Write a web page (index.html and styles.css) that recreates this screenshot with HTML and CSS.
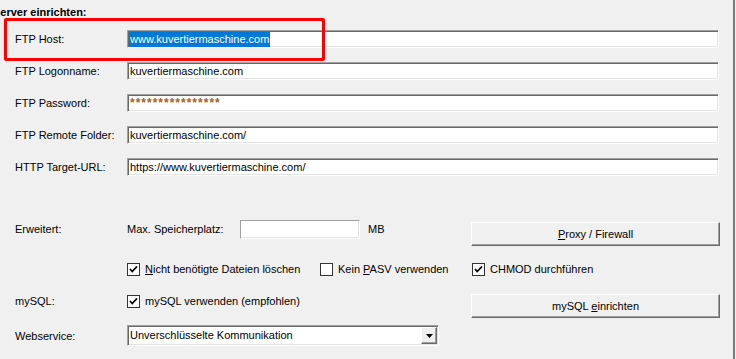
FILE: index.html
```html
<!DOCTYPE html>
<html lang="de">
<head>
    <meta charset="UTF-8">
    <meta name="viewport" content="width=device-width, initial-scale=1.0">
    <title>Server einrichten</title>
    <link rel="stylesheet" href="styles.css">
</head>
<body>
    <div class="panel">
        <div class="title">Server einrichten:</div>

        <div class="fields">
            <div class="row">
                <span class="lbl">FTP Host:</span>
                <div class="field"><span class="sel">www.kuvertiermaschine.com</span></div>
            </div>
            <div class="row">
                <span class="lbl">FTP Logonname:</span>
                <div class="field">kuvertiermaschine.com</div>
            </div>
            <div class="row">
                <span class="lbl">FTP Password:</span>
                <div class="field"><span class="pw">****************</span></div>
            </div>
            <div class="row">
                <span class="lbl">FTP Remote Folder:</span>
                <div class="field">kuvertiermaschine.com/</div>
            </div>
            <div class="row">
                <span class="lbl">HTTP Target-URL:</span>
                <div class="field">https://www.kuvertiermaschine.com/</div>
            </div>
        </div>

        <div class="opts">
            <div class="opt opt-a">
                <span class="lbl">Erweitert:</span>
                <div class="mid">
                    <span class="cap">Max. Speicherplatz:</span>
                    <div class="box"></div>
                    <span class="unit">MB</span>
                </div>
                <div class="side">
                    <button class="btn btn-a" type="button"><span><u>P</u>roxy / Firewall</span></button>
                </div>
            </div>

            <div class="opt opt-b">
                <span class="lbl"></span>
                <div class="mid">
                    <label class="check wide">
                        <span class="cb"><svg viewBox="0 0 11 11" width="11" height="11"><path d="M2 5 L4.2 7.5 L9 2.5" fill="none" stroke="#000" stroke-width="1.8"/></svg></span>
                        <span><u>N</u>icht benötigte Dateien löschen</span>
                    </label>
                    <label class="check">
                        <span class="cb"></span>
                        <span>Kein <u>P</u>ASV verwenden</span>
                    </label>
                </div>
                <div class="side">
                    <label class="check shift">
                        <span class="cb"><svg viewBox="0 0 11 11" width="11" height="11"><path d="M2 5 L4.2 7.5 L9 2.5" fill="none" stroke="#000" stroke-width="1.8"/></svg></span>
                        <span>CHMOD durchführen</span>
                    </label>
                </div>
            </div>

            <div class="opt opt-c">
                <span class="lbl">mySQL:</span>
                <div class="mid">
                    <label class="check">
                        <span class="cb"><svg viewBox="0 0 11 11" width="11" height="11"><path d="M2 5 L4.2 7.5 L9 2.5" fill="none" stroke="#000" stroke-width="1.8"/></svg></span>
                        <span>mySQL verwenden (empfohlen)</span>
                    </label>
                </div>
                <div class="side">
                    <button class="btn" type="button"><span>mySQL <u>e</u>inrichten</span></button>
                </div>
            </div>

            <div class="opt opt-d">
                <span class="lbl">Webservice:</span>
                <div class="drop">
                    <span class="drop-text">Unverschlüsselte Kommunikation</span>
                    <span class="drop-btn"><svg viewBox="0 0 7 4" width="7" height="4"><polygon points="0,0 7,0 3.5,4" fill="#000"/></svg></span>
                </div>
            </div>
        </div>

        <div class="mark"></div>
    </div>
</body>
</html>
```

FILE: styles.css
```css
body {
    margin: 0;
    background: #f0f0f0;
    font-family: "Liberation Sans", Arial, sans-serif;
    font-size: 11px;
    color: #000;
}

.panel {
    position: relative;
    width: 733px;
    height: 359px;
    border-right: 2px solid #7a7a7a;
    overflow: hidden;
}

.title {
    font-weight: bold;
    padding-top: 5px;
    height: 18px;
    line-height: 15px;
    margin-left: -7px;
    white-space: nowrap;
}

.fields {
    padding-left: 15px;
}

.row {
    display: flex;
    align-items: center;
    height: 32px;
}

.lbl {
    width: 112px;
    flex: none;
}

.field {
    width: 592px;
    height: 18px;
    box-sizing: border-box;
    background: #fff;
    border: 1px solid;
    border-color: #a0a0a0 #fff #fff #a0a0a0;
    box-shadow: inset 1px 1px #696969, inset -1px -1px #e3e3e3;
    padding: 0 2px;
    line-height: 16px;
    white-space: nowrap;
    overflow: hidden;
}

.sel {
    display: inline-block;
    margin-left: -1px;
    padding: 0 1px;
    line-height: 15px;
    background: #0078d7;
    color: #fff;
    vertical-align: top;
    margin-top: 1px;
}

.pw {
    color: #a4621e;
    font-size: 12px;
    font-weight: bold;
    letter-spacing: 1px;
}

.opts {
    padding-left: 15px;
}

.opt {
    display: flex;
    align-items: center;
}

.mid {
    width: 344px;
    flex: none;
    display: flex;
    align-items: center;
}

.side {
    width: 249px;
    flex: none;
}

.opt-a {
    margin-top: 37px;
    height: 26px;
    align-items: flex-start;
}

.opt-a .lbl,
.cap,
.unit {
    line-height: 19px;
}

.opt-a .mid {
    align-items: flex-start;
}

.cap {
    width: 113px;
    flex: none;
}

.box {
    width: 120px;
    height: 19px;
    box-sizing: border-box;
    background: #fff;
    border: 1px solid;
    border-color: #a0a0a0 #fff #fff #a0a0a0;
    box-shadow: inset -1px -1px #e3e3e3;
}

.unit {
    margin-left: 8px;
}

.btn {
    width: 249px;
    height: 24px;
    box-sizing: border-box;
    padding: 0;
    background: #f0f0f0;
    border: 1px solid;
    border-color: #fff #696969 #696969 #fff;
    box-shadow: inset -1px -1px #a0a0a0;
    font: inherit;
    color: #000;
    display: flex;
    align-items: center;
    justify-content: center;
}

.btn-a {
    margin-top: 2px;
}

.opt-b {
    margin-top: 13px;
    height: 20px;
}

.check {
    display: flex;
    align-items: center;
    line-height: 15px;
}

.check.wide {
    width: 193px;
}

.check.shift {
    margin-left: 1px;
}

.cb {
    width: 13px;
    height: 13px;
    box-sizing: border-box;
    border: 1px solid #333;
    background: #fff;
    margin-right: 5px;
    display: flex;
    align-items: center;
    justify-content: center;
    flex: none;
}

.opt-c {
    margin-top: 15px;
    height: 24px;
    align-items: flex-start;
}

.opt-c .lbl {
    line-height: 15px;
}

.opt-c .mid {
    height: 15px;
}

.opt-d {
    margin-top: 7px;
    height: 21px;
}

.drop {
    width: 312px;
    height: 21px;
    box-sizing: border-box;
    background: #fff;
    border: 1px solid;
    border-color: #a0a0a0 #fff #fff #a0a0a0;
    box-shadow: inset 1px 1px #696969, inset -1px -1px #e3e3e3;
    padding: 1px 1px 1px 2px;
    display: flex;
    align-items: center;
}

.drop-text {
    flex: 1;
    line-height: 17px;
}

.drop-btn {
    width: 16px;
    height: 17px;
    box-sizing: border-box;
    background: #f0f0f0;
    border: 1px solid;
    border-color: #fff #696969 #696969 #fff;
    box-shadow: inset -1px -1px #a0a0a0;
    display: flex;
    align-items: center;
    justify-content: center;
}

.mark {
    position: absolute;
    left: 4px;
    top: 18px;
    width: 321px;
    height: 43px;
    box-sizing: border-box;
    border: 3px solid #f00;
    border-radius: 2px;
}
```
